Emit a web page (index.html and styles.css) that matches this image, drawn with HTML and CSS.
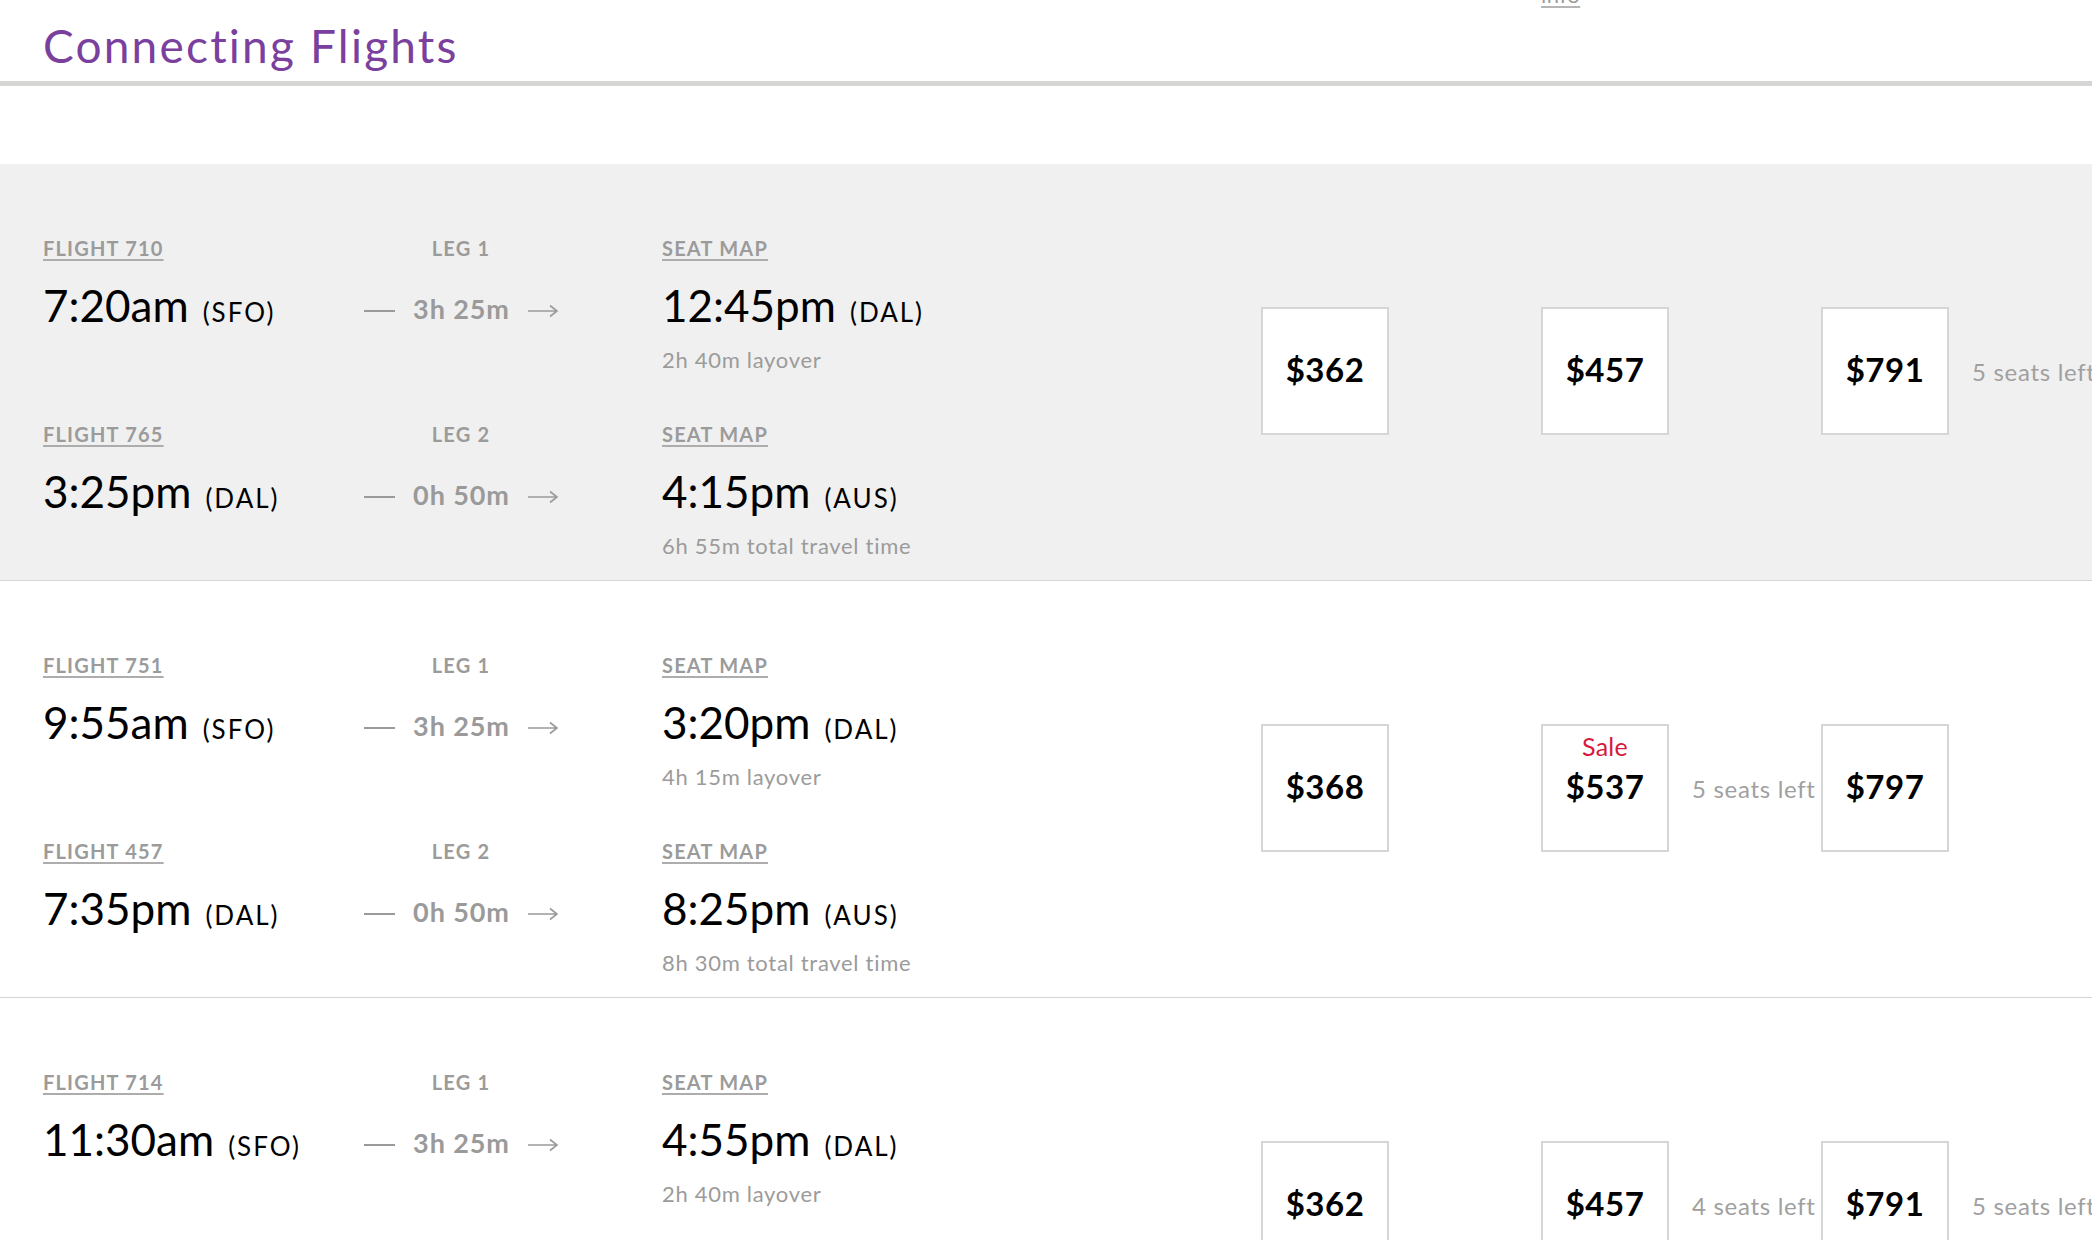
FILE: index.html
```html
<!DOCTYPE html>
<html lang="en">
<head>
<meta charset="utf-8">
<title>Connecting Flights</title>
<link rel="stylesheet" href="styles.css">
</head>
<body>
<header class="page-head">
  <h1 class="page-title">Connecting Flights</h1>
  <a class="info">info</a>
</header>

<section class="result alt">
  <div class="legs">
    <div class="leg">
      <div class="cell">
        <div class="lbl"><a class="link">FLIGHT 710</a></div>
        <div class="time">7:20am<span class="code">(SFO)</span></div>
      </div>
      <div class="cell mid">
        <div class="lbl">LEG 1</div>
        <div class="dur"><span class="dash"></span>3h 25m<svg class="arrow" width="30" height="14" viewBox="0 0 30 14"><path d="M0 7H29M22 1.5L29 7L22 12.5"/></svg></div>
      </div>
      <div class="cell">
        <div class="lbl"><a class="link">SEAT MAP</a></div>
        <div class="time">12:45pm<span class="code">(DAL)</span></div>
        <div class="sub">2h 40m layover</div>
      </div>
    </div>
    <div class="leg">
      <div class="cell">
        <div class="lbl"><a class="link">FLIGHT 765</a></div>
        <div class="time">3:25pm<span class="code">(DAL)</span></div>
      </div>
      <div class="cell mid">
        <div class="lbl">LEG 2</div>
        <div class="dur"><span class="dash"></span>0h 50m<svg class="arrow" width="30" height="14" viewBox="0 0 30 14"><path d="M0 7H29M22 1.5L29 7L22 12.5"/></svg></div>
      </div>
      <div class="cell">
        <div class="lbl"><a class="link">SEAT MAP</a></div>
        <div class="time">4:15pm<span class="code">(AUS)</span></div>
        <div class="sub">6h 55m total travel time</div>
      </div>
    </div>
  </div>
  <div class="fares">
    <div class="fare"><div class="box">$362</div></div>
    <div class="fare"><div class="box">$457</div></div>
    <div class="fare"><div class="box">$791</div><span class="seats">5 seats left</span></div>
  </div>
</section>

<section class="result">
  <div class="legs">
    <div class="leg">
      <div class="cell">
        <div class="lbl"><a class="link">FLIGHT 751</a></div>
        <div class="time">9:55am<span class="code">(SFO)</span></div>
      </div>
      <div class="cell mid">
        <div class="lbl">LEG 1</div>
        <div class="dur"><span class="dash"></span>3h 25m<svg class="arrow" width="30" height="14" viewBox="0 0 30 14"><path d="M0 7H29M22 1.5L29 7L22 12.5"/></svg></div>
      </div>
      <div class="cell">
        <div class="lbl"><a class="link">SEAT MAP</a></div>
        <div class="time">3:20pm<span class="code">(DAL)</span></div>
        <div class="sub">4h 15m layover</div>
      </div>
    </div>
    <div class="leg">
      <div class="cell">
        <div class="lbl"><a class="link">FLIGHT 457</a></div>
        <div class="time">7:35pm<span class="code">(DAL)</span></div>
      </div>
      <div class="cell mid">
        <div class="lbl">LEG 2</div>
        <div class="dur"><span class="dash"></span>0h 50m<svg class="arrow" width="30" height="14" viewBox="0 0 30 14"><path d="M0 7H29M22 1.5L29 7L22 12.5"/></svg></div>
      </div>
      <div class="cell">
        <div class="lbl"><a class="link">SEAT MAP</a></div>
        <div class="time">8:25pm<span class="code">(AUS)</span></div>
        <div class="sub">8h 30m total travel time</div>
      </div>
    </div>
  </div>
  <div class="fares">
    <div class="fare"><div class="box">$368</div></div>
    <div class="fare"><div class="box"><span class="sale">Sale</span>$537</div><span class="seats">5 seats left</span></div>
    <div class="fare"><div class="box">$797</div></div>
  </div>
</section>

<section class="result">
  <div class="legs">
    <div class="leg">
      <div class="cell">
        <div class="lbl"><a class="link">FLIGHT 714</a></div>
        <div class="time">11:30am<span class="code">(SFO)</span></div>
      </div>
      <div class="cell mid">
        <div class="lbl">LEG 1</div>
        <div class="dur"><span class="dash"></span>3h 25m<svg class="arrow" width="30" height="14" viewBox="0 0 30 14"><path d="M0 7H29M22 1.5L29 7L22 12.5"/></svg></div>
      </div>
      <div class="cell">
        <div class="lbl"><a class="link">SEAT MAP</a></div>
        <div class="time">4:55pm<span class="code">(DAL)</span></div>
        <div class="sub">2h 40m layover</div>
      </div>
    </div>
  </div>
  <div class="fares">
    <div class="fare"><div class="box">$362</div></div>
    <div class="fare"><div class="box">$457</div><span class="seats">4 seats left</span></div>
    <div class="fare"><div class="box">$791</div><span class="seats">5 seats left</span></div>
  </div>
</section>
</body>
</html>
```

FILE: styles.css
```css
html, body {
  margin: 0;
  padding: 0;
  overflow: hidden;
}

body {
  width: 2092px;
  height: 1240px;
  background: #ffffff;
  color: #000000;
  font-family: Lato, "Open Sans", "Liberation Sans", sans-serif;
}

.page-head {
  position: relative;
  padding: 21px 0 10px 43px;
  border-bottom: 5px solid #d6d6d4;
  margin-bottom: 78px;
}

.page-title {
  margin: 0;
  font-size: 46px;
  line-height: 50px;
  font-weight: 400;
  letter-spacing: 2.2px;
  color: #7b3f9e;
}

.info {
  position: absolute;
  left: 1541px;
  top: -17px;
  font-size: 22px;
  line-height: 24px;
  letter-spacing: 0.5px;
  color: #9b9b9b;
  text-decoration: underline;
  text-decoration-color: #b5b5b5;
  text-decoration-thickness: 2px;
  text-underline-offset: 3px;
}

.result {
  display: flex;
  height: 417px;
  box-sizing: border-box;
  padding: 72px 0 0 43px;
  border-bottom: 1px solid #d5d5d5;
  background: #ffffff;
}

.result.alt {
  background: #f0f0f0;
}

.legs {
  flex: 0 0 1218px;
}

.leg {
  display: grid;
  grid-template-columns: 217px 362px auto;
  column-gap: 20px;
  align-items: start;
}

.leg + .leg {
  margin-top: 47px;
}

.cell.mid {
  text-align: center;
}

.lbl {
  font-size: 20px;
  line-height: 24px;
  font-weight: 700;
  letter-spacing: 1.2px;
  color: #9b9b9b;
}

.link {
  color: #9b9b9b;
  text-decoration: underline;
  text-decoration-color: #adadad;
  text-decoration-thickness: 2px;
  text-underline-offset: 3px;
}

.time {
  margin-top: 20px;
  font-size: 44px;
  line-height: 50px;
  font-weight: 400;
  color: #000000;
  white-space: nowrap;
}

.code {
  margin-left: 14px;
  font-size: 26px;
  letter-spacing: 2px;
}

.dur {
  margin-top: 20px;
  padding-top: 4px;
  font-size: 27px;
  line-height: 50px;
  font-weight: 700;
  letter-spacing: 0.9px;
  color: #9a9a9a;
  white-space: nowrap;
}

.dash {
  display: inline-block;
  width: 31px;
  height: 2px;
  margin-right: 18px;
  vertical-align: 7px;
  background: #9a9a9a;
}

.arrow {
  margin-left: 18px;
  vertical-align: 1px;
}

.arrow path {
  fill: none;
  stroke: #9a9a9a;
  stroke-width: 1.6;
}

.sub {
  margin-top: 8px;
  font-size: 22px;
  line-height: 30px;
  letter-spacing: 0.7px;
  color: #9b9b9b;
}

.fares {
  display: flex;
  align-self: flex-start;
  margin-top: 71px;
}

.fare {
  flex: 0 0 280px;
  display: flex;
  align-items: center;
}

.box {
  position: relative;
  width: 128px;
  height: 128px;
  box-sizing: border-box;
  border: 2px solid #d6d6d6;
  background: #ffffff;
  display: flex;
  align-items: center;
  justify-content: center;
  font-size: 33px;
  font-weight: 700;
  letter-spacing: 0.5px;
  color: #000000;
  padding-bottom: 4px;
}

.sale {
  position: absolute;
  top: 5px;
  left: 0;
  right: 0;
  text-align: center;
  font-size: 25px;
  font-weight: 400;
  letter-spacing: 0.3px;
  color: #d7193b;
}

.seats {
  margin-left: 23px;
  font-size: 24px;
  letter-spacing: 0.7px;
  color: #a0a0a0;
  white-space: nowrap;
}
```
